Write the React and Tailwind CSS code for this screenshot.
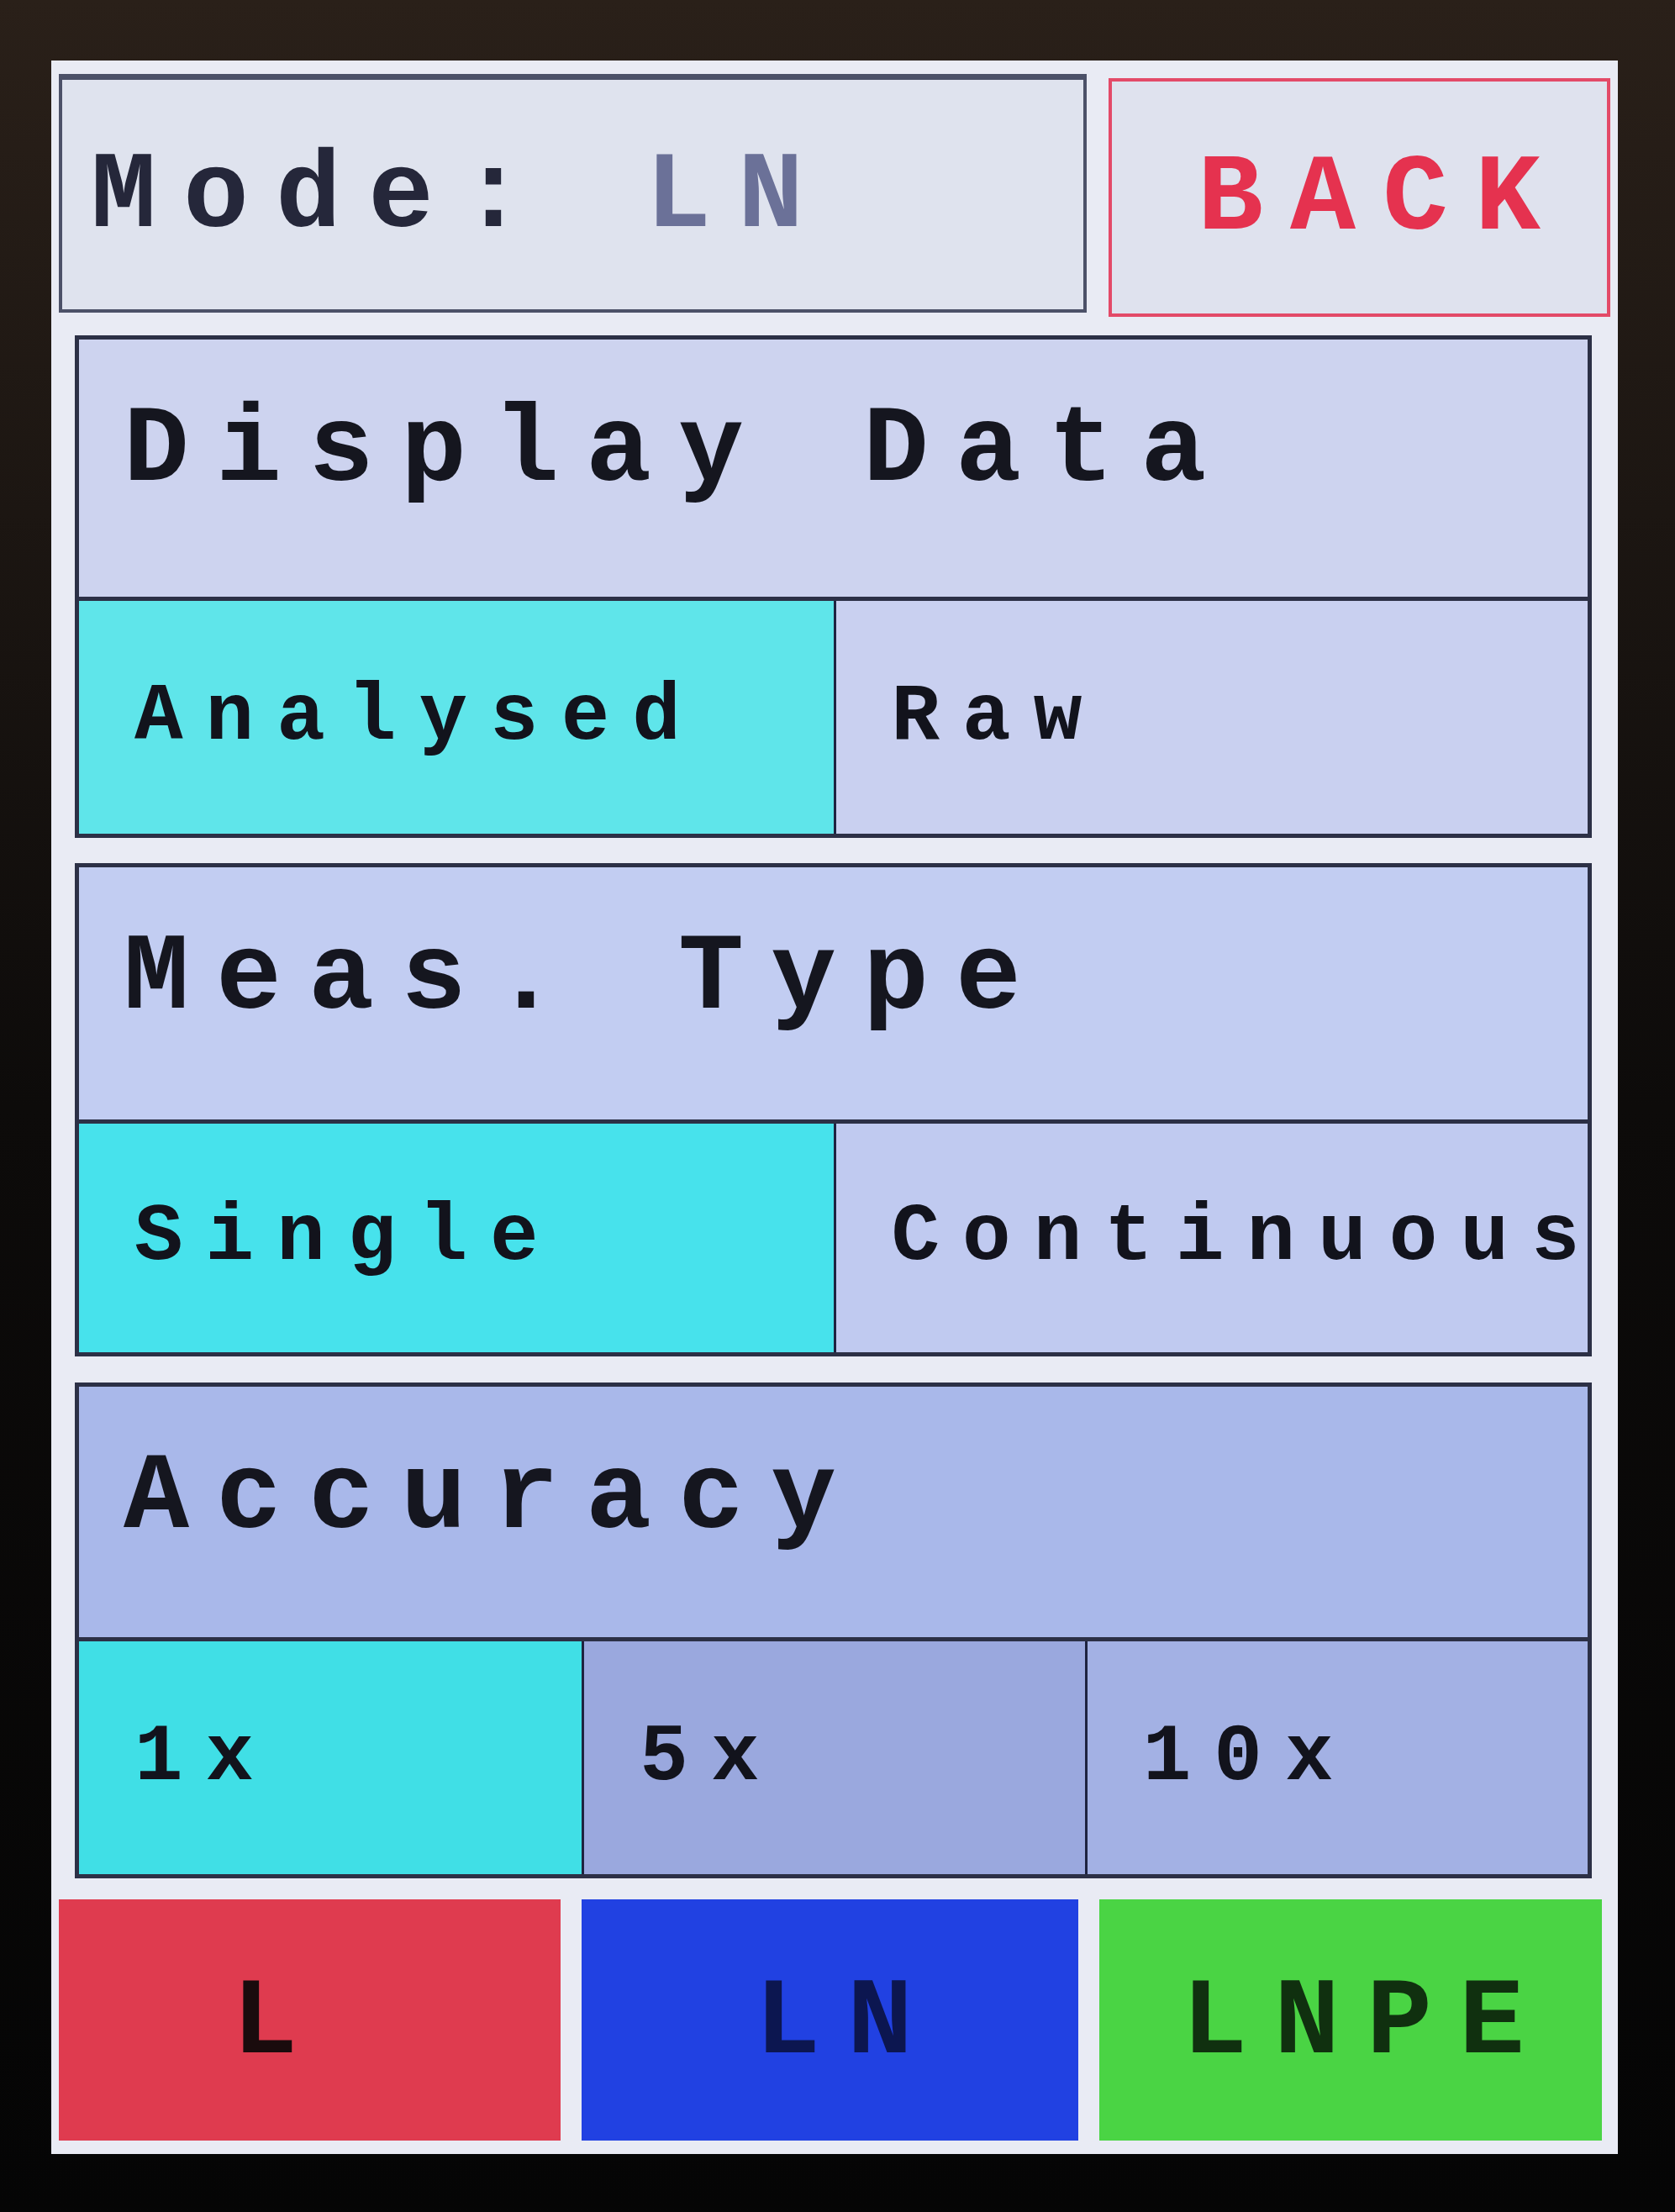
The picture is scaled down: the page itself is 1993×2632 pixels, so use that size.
import React from 'react';

const mono = "font-['Liberation_Mono','Courier_New',monospace] font-bold leading-none";

const Section = ({ title, options, heights, bg, cols }) => (
  <div className="ml-[28px] mr-[31px] border-[5px] border-[#2c3046] flex flex-col">
    <div
      className={`border-b-[5px] border-[#2c3046] ${bg} pl-[53px] pt-[68px] ${mono} text-[130px] tracking-[32px] text-[#15161f]`}
      style={{ height: heights[0] }}
    >
      {title}
    </div>
    <div className={`grid ${cols}`} style={{ height: heights[1] }}>
      {options.map((o, i) => (
        <div
          key={o.label}
          className={`flex items-center pl-[66px] ${o.bg} ${i > 0 ? 'border-l-[3px] border-[#1e2340]' : ''} ${mono} text-[96px] tracking-[27px] text-[#12131c] whitespace-nowrap`}
        >
          {o.label}
        </div>
      ))}
    </div>
  </div>
);

export default function App() {
  return (
    <div className="w-[1993px] h-[2632px] bg-gradient-to-b from-[#2a2019] via-[#0d0b0a] to-[#050505] pt-[72px] pl-[61px] pr-[68px] pb-[69px]">
      <div className="w-full h-full bg-[#e9ebf4] flex flex-col">
        {/* top bar */}
        <div className="mt-[16px] ml-[9px] mr-[9px] h-[289px] flex gap-[26px]">
          <div className={`w-[1223px] h-[284px] self-start bg-[#dfe3ee] border-[4px] border-[#4c5168] border-t-[7px] flex items-center pl-[34px] pt-[6px] ${mono} text-[130px] tracking-[32px] whitespace-nowrap`}>
            <span className="text-[#25273a]">Mode:</span>
            <span className="text-[#6b7198] ml-[110px]">LN</span>
          </div>
          <div className={`flex-1 h-[284px] self-end bg-[#dfe2ee] border-[4px] border-[#e34a68] flex items-center pl-[102px] pt-[6px] ${mono} text-[130px] tracking-[32px] text-[#e5324f]`}>
            BACK
          </div>
        </div>

        <div className="mt-[22px]">
          <Section
            title="Display Data"
            heights={[311, 277]}
            bg="bg-[#cdd3ef]"
            cols="grid-cols-2"
            options={[
              { label: 'Analysed', bg: 'bg-[#5fe5ea]' },
              { label: 'Raw', bg: 'bg-[#c9d0f0]' },
            ]}
          />
        </div>

        <div className="mt-[30px]">
          <Section
            title="Meas. Type"
            heights={[305, 272]}
            bg="bg-[#c2cdf2]"
            cols="grid-cols-2"
            options={[
              { label: 'Single', bg: 'bg-[#47e2ec]' },
              { label: 'Continuous', bg: 'bg-[#c0caf0]' },
            ]}
          />
        </div>

        <div className="mt-[31px]">
          <Section
            title="Accuracy"
            heights={[303, 277]}
            bg="bg-[#a9b8ea]"
            cols="grid-cols-3"
            options={[
              { label: '1x', bg: 'bg-[#40dfe6]' },
              { label: '5x', bg: 'bg-[#9aa8de]' },
              { label: '10x', bg: 'bg-[#a3b1e4]' },
            ]}
          />
        </div>

        {/* mode buttons */}
        <div className="mt-[25px] ml-[9px] mr-[19px] h-[287px] flex gap-[25px]">
          <div className={`w-[597px] bg-[#df3b4f] flex items-center pl-[206px] pt-[8px] ${mono} text-[130px] tracking-[32px] text-[#1a0b0d]`}>
            L
          </div>
          <div className={`w-[591px] bg-[#2141e2] flex items-center pl-[206px] pt-[8px] ${mono} text-[130px] tracking-[32px] text-[#0c1650]`}>
            LN
          </div>
          <div className={`flex-1 bg-[#4ad444] flex items-center pl-[98px] pt-[8px] ${mono} text-[130px] tracking-[32px] text-[#10300f]`}>
            LNPE
          </div>
        </div>
      </div>
    </div>
  );
}
